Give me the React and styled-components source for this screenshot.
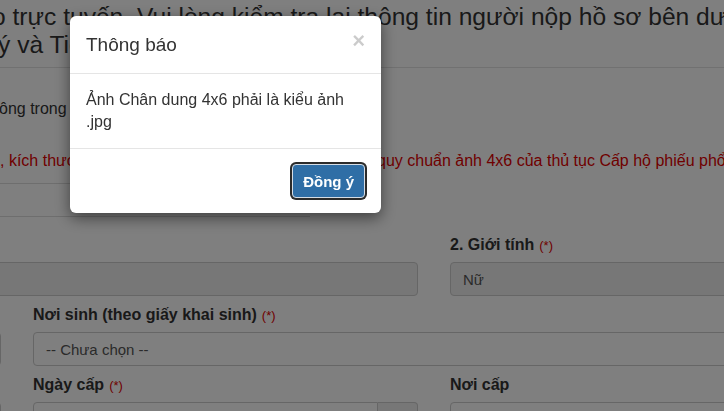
import React from 'react';
import styled, { createGlobalStyle } from 'styled-components';

const GlobalStyle = createGlobalStyle`
  html, body {
    margin: 0;
    padding: 0;
    overflow: hidden;
    background: #fff;
  }
  body {
    font-family: "Liberation Sans", Arial, "Helvetica Neue", sans-serif;
    color: #333;
  }
  * {
    box-sizing: border-box;
  }
`;

const Page = styled.main`
  width: 724px;
  height: 411px;
  overflow: hidden;
  padding-top: 3px;
`;

const Lead = styled.h3`
  margin: 0;
  font-size: 24.6px;
  line-height: 28px;
  font-weight: 400;
  color: #333;
  white-space: nowrap;
`;

const LeadLine = styled.span`
  display: block;
  margin-left: ${(p) => p.$shift || 0}px;
`;

const Rule = styled.hr`
  margin: 8px 0 0;
  border: 0;
  border-top: 1px solid #e2e2e2;
`;

const Note = styled.p`
  margin: 30px 0 0 -1px;
  font-size: 16px;
  line-height: 22px;
  white-space: nowrap;
`;

const Warning = styled.p`
  margin: 30px 0 0;
  font-size: 16px;
  line-height: 22px;
  color: #e00000;
  white-space: nowrap;
`;

const UploadBox = styled.div`
  margin: 11px 0 0 -10px;
  width: 320px;
  height: 34px;
  border-top: 1px solid #dcdcdc;
  border-bottom: 1px solid #dcdcdc;
`;

const FormGrid = styled.div`
  display: grid;
  grid-template-columns: repeat(3, 385px);
  column-gap: 32px;
  row-gap: 8px;
  margin: 17px 0 0 -384px;
`;

const Field = styled.div`
  grid-column: span ${(p) => p.$span || 1};
  display: flex;
  flex-direction: column;
  gap: 6px;
`;

const Label = styled.label`
  display: block;
  height: 22px;
  font-size: 16px;
  line-height: 22px;
  font-weight: 700;
  color: #333;
  white-space: nowrap;
`;

const Required = styled.span`
  margin-left: 5px;
  font-size: 13px;
  line-height: 1;
  font-weight: 400;
  color: #e00000;
`;

const Control = styled.div`
  flex: none;
  height: 34px;
  padding: 0 12px;
  display: flex;
  align-items: center;
  font-size: 15px;
  color: #555;
  background: ${(p) => (p.$disabled ? '#eee' : '#fff')};
  border: 1px solid #ccc;
  border-radius: 4px;
  white-space: nowrap;
`;

const InputGroup = styled.div`
  display: flex;
  height: 34px;
`;

const GroupInput = styled(Control)`
  flex: 1;
  border-radius: 4px 0 0 4px;
`;

const Addon = styled.span`
  width: 40px;
  display: flex;
  align-items: center;
  justify-content: center;
  background: #eee;
  border: 1px solid #ccc;
  border-left: 0;
  border-radius: 0 4px 4px 0;
  color: #555;
`;

const Backdrop = styled.div`
  position: fixed;
  inset: 0;
  background: rgba(0, 0, 0, 0.5);
`;

const Dialog = styled.section`
  position: fixed;
  top: 16px;
  left: 70px;
  width: 311px;
  background: #fff;
  border-radius: 6px;
  box-shadow: 0 5px 15px rgba(0, 0, 0, 0.5);
`;

const DialogHeader = styled.header`
  display: flex;
  align-items: center;
  justify-content: space-between;
  padding: 15px 16px;
  border-bottom: 1px solid #e5e5e5;
`;

const DialogTitle = styled.h4`
  margin: 0;
  font-size: 19px;
  line-height: 27px;
  font-weight: 400;
  color: #333;
`;

const Close = styled.button`
  margin: -8px 0 0 0;
  padding: 0;
  border: 0;
  background: none;
  font-family: inherit;
  font-size: 22px;
  line-height: 1;
  font-weight: 700;
  color: #000;
  opacity: 0.2;
`;

const DialogBody = styled.div`
  padding: 15px 16px;
  font-size: 16px;
  line-height: 22px;
  color: #333;
`;

const DialogFooter = styled.footer`
  display: flex;
  justify-content: flex-end;
  padding: 15px 16px;
  border-top: 1px solid #e5e5e5;
`;

const PrimaryButton = styled.button`
  height: 34px;
  padding: 0 10px;
  font-family: inherit;
  font-size: 15px;
  font-weight: 700;
  color: #fff;
  background: #2f6ea6;
  border: 1px solid #d5dde6;
  border-radius: 4px;
  box-shadow: 0 0 0 2px #2b2b2b;
`;

function CalendarIcon() {
  return (
    <svg width="14" height="14" viewBox="0 0 14 14" fill="none" stroke="#555" strokeWidth="1.4">
      <rect x="1.5" y="2.5" width="11" height="10" rx="1" />
      <line x1="1.5" y1="5.5" x2="12.5" y2="5.5" />
    </svg>
  );
}

export default function App() {
  return (
    <>
      <GlobalStyle />
      <Page>
        <Lead>
          <LeadLine $shift={-8}>o trực tuyến. Vui lòng kiểm tra lại thông tin người nộp hồ sơ bên dưới.</LeadLine>
          <LeadLine $shift={-2}>ý và Tiếp nhận hồ sơ.</LeadLine>
        </Lead>
        <Rule />
        <Note>ông trong ngày làm việc.</Note>
        <Warning>, kích thước ảnh chân dung phải đảm bảo đúng theo quy chuẩn ảnh 4x6 của thủ tục Cấp hộ phiếu phổ thông.</Warning>
        <UploadBox />
        <FormGrid>
          <Field $span={2}>
            <Label>
              1. Họ và tên<Required>(*)</Required>
            </Label>
            <Control $disabled />
          </Field>
          <Field>
            <Label>
              2. Giới tính<Required>(*)</Required>
            </Label>
            <Control $disabled>Nữ</Control>
          </Field>
          <Field>
            <Label>Quốc tịch</Label>
            <Control />
          </Field>
          <Field $span={2}>
            <Label>
              Nơi sinh (theo giấy khai sinh)<Required>(*)</Required>
            </Label>
            <Control>-- Chưa chọn --</Control>
          </Field>
          <Field>
            <Label>Số CMND/CCCD</Label>
            <Control />
          </Field>
          <Field>
            <Label>
              Ngày cấp<Required>(*)</Required>
            </Label>
            <InputGroup>
              <GroupInput />
              <Addon>
                <CalendarIcon />
              </Addon>
            </InputGroup>
          </Field>
          <Field>
            <Label>Nơi cấp</Label>
            <Control />
          </Field>
        </FormGrid>
      </Page>
      <Backdrop />
      <Dialog role="dialog">
        <DialogHeader>
          <DialogTitle>Thông báo</DialogTitle>
          <Close type="button">×</Close>
        </DialogHeader>
        <DialogBody>Ảnh Chân dung 4x6 phải là kiểu ảnh .jpg</DialogBody>
        <DialogFooter>
          <PrimaryButton type="button">Đồng ý</PrimaryButton>
        </DialogFooter>
      </Dialog>
    </>
  );
}
